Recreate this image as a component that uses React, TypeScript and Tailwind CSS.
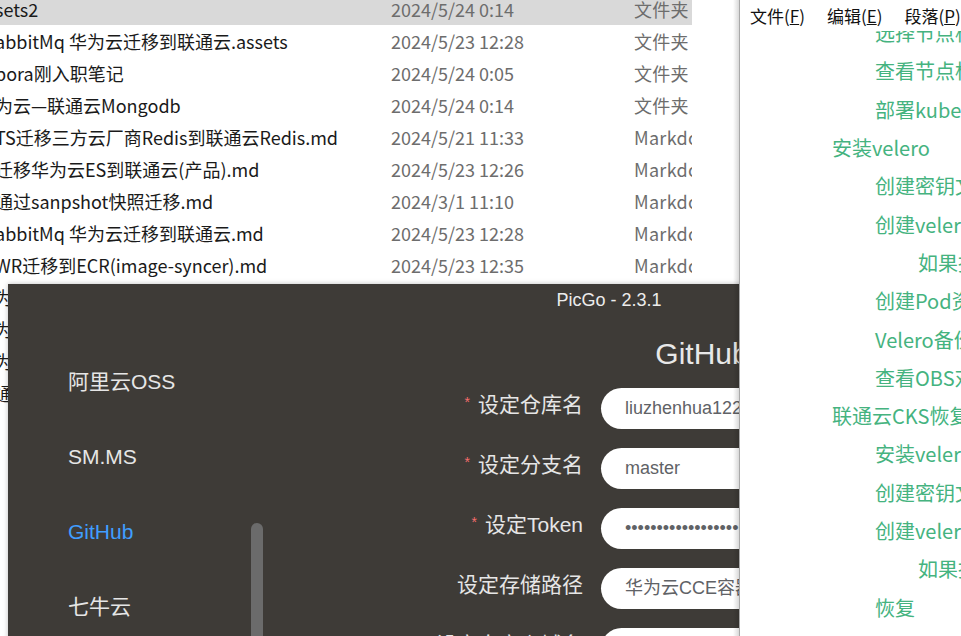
import React from "react";

const files = [
  { name: "sets2", date: "2024/5/24 0:14", type: "文件夹", selected: true },
  { name: "abbitMq 华为云迁移到联通云.assets", date: "2024/5/23 12:28", type: "文件夹" },
  { name: "pora刚入职笔记", date: "2024/5/24 0:05", type: "文件夹" },
  { name: "为云—联通云Mongodb", date: "2024/5/24 0:14", type: "文件夹" },
  { name: "TS迁移三方云厂商Redis到联通云Redis.md", date: "2024/5/21 11:33", type: "Markdown" },
  { name: "迁移华为云ES到联通云(产品).md", date: "2024/5/23 12:26", type: "Markdown" },
  { name: "通过sanpshot快照迁移.md", date: "2024/3/1 11:10", type: "Markdown" },
  { name: "abbitMq 华为云迁移到联通云.md", date: "2024/5/23 12:28", type: "Markdown" },
  { name: "WR迁移到ECR(image-syncer).md", date: "2024/5/23 12:35", type: "Markdown" },
  { name: "为云CCE迁移.md", date: "2024/5/23 12:40", type: "Markdown" },
  { name: "为云RDS迁移.md", date: "2024/5/23 12:41", type: "Markdown" },
  { name: "为云OBS迁移.md", date: "2024/5/23 12:42", type: "Markdown" },
  { name: "通云环境说明.md", date: "2024/5/23 12:43", type: "Markdown" },
];

const outline = [
  { text: "选择节点标签", level: 3 },
  { text: "查看节点标签", level: 3 },
  { text: "部署kube-state", level: 3 },
  { text: "安装velero", level: 2 },
  { text: "创建密钥文件", level: 3 },
  { text: "创建velero实例", level: 3 },
  { text: "如果报错", level: 4 },
  { text: "创建Pod资源", level: 3 },
  { text: "Velero备份数据", level: 3 },
  { text: "查看OBS对象", level: 3 },
  { text: "联通云CKS恢复", level: 2 },
  { text: "安装velero", level: 3 },
  { text: "创建密钥文件", level: 3 },
  { text: "创建velero实例", level: 3 },
  { text: "如果报错", level: 4 },
  { text: "恢复", level: 3 },
];

const indent: Record<number, string> = {
  2: "pl-[92px]",
  3: "pl-[135px]",
  4: "pl-[178px]",
};

const uploaders = [
  { name: "阿里云OSS" },
  { name: "SM.MS" },
  { name: "GitHub", active: true },
  { name: "七牛云" },
];

const fields = [
  { label: "设定仓库名", required: true, value: "liuzhenhua122/typora-images" },
  { label: "设定分支名", required: true, value: "master" },
  { label: "设定Token", required: true, value: "•".repeat(40) },
  { label: "设定存储路径", required: false, value: "华为云CCE容器迁移/" },
  { label: "设定自定义域名", required: false, value: "" },
];

function Explorer() {
  return (
    <div className="absolute left-0 top-0 w-[733px] h-[430px] bg-white font-['Noto_Sans_CJK_SC',sans-serif] text-[18px]">
      <div className="w-[692px] overflow-hidden -mt-[7px]">
        {files.map((f, i) => (
          <div
            key={i}
            className={`flex h-[32px] items-center whitespace-nowrap ${f.selected ? "bg-[#d9d9d9]" : ""}`}
          >
            <div className="w-[391px] shrink-0 -ml-[5px] text-[#1a1a1a] overflow-hidden">{f.name}</div>
            <div className="w-[243px] shrink-0 ml-[5px] text-[#6d6d6d]">{f.date}</div>
            <div className="shrink-0 text-[#6d6d6d] tracking-[0.3px]">{f.type}</div>
          </div>
        ))}
      </div>
    </div>
  );
}

function PicGo() {
  return (
    <div className="absolute left-[8px] top-[284px] w-[1202px] h-[400px] bg-[#3e3b37] shadow-[0_0_5px_rgba(0,0,0,0.25)] font-['Liberation_Sans','Noto_Sans_CJK_SC',sans-serif] text-[#e6e6e6]">
      <div className="h-[32px] flex items-center justify-center text-[18px] text-[#ececec]">PicGo - 2.3.1</div>
      <div className="flex">
        <div className="relative w-[257px] shrink-0 pt-[28px] h-[368px]">
          {uploaders.map((u) => (
            <div
              key={u.name}
              className={`h-[75px] flex items-center pl-[60px] text-[21px] ${u.active ? "text-[#409eff]" : "text-[#e6e6e6]"}`}
            >
              {u.name}
            </div>
          ))}
          <div className="absolute left-[243px] top-[207px] w-[12px] h-[200px] rounded-full bg-[#6b6b6b]" />
        </div>
        <div className="flex-1 pl-[168px] pt-[18px] flex flex-col">
          <div className="w-[538px] h-[40px] leading-[40px] text-center text-[30px] text-[#e8e8e8]">GitHub</div>
          <div className="w-[538px] mt-[14px] flex flex-col gap-[19px]">
            {fields.map((f) => (
              <div key={f.label} className="flex items-center h-[41px]">
                <div className="w-[150px] shrink-0 text-right text-[21px] text-[#e6e6e6] whitespace-nowrap -mt-[8px]">
                  {f.required && <span className="relative -top-[5px] mr-[8px] text-[14px] text-[#f56c6c]">*</span>}
                  {f.label}
                </div>
                <div className="ml-[18px] w-[370px] h-[41px] rounded-full bg-white pl-[24px] flex items-center text-[18px] text-[#606266] whitespace-nowrap overflow-hidden">
                  {f.value}
                </div>
              </div>
            ))}
          </div>
        </div>
      </div>
    </div>
  );
}

function Typora() {
  return (
    <div className="absolute left-[733px] top-0 h-[636px] w-[228px] z-20 flex font-['Noto_Sans_CJK_SC',sans-serif]">
      <div className="w-[6px] h-full bg-gradient-to-r from-black/0 to-black/15" />
      <div className="w-px h-full bg-[#a9a9a9]" />
      <div className="flex-1 bg-white overflow-hidden">
        <div className="relative z-10 h-[31px] bg-white flex items-center gap-[22px] pl-[10px] text-[17px] text-[#111] whitespace-nowrap">
          <span>
            文件(<span className="underline">F</span>)
          </span>
          <span>
            编辑(<span className="underline">E</span>)
          </span>
          <span>
            段落(<span className="underline">P</span>)
          </span>
        </div>
        <div className="-mt-[17px]">
          {outline.map((o, i) => (
            <div
              key={i}
              className={`h-[38.3px] flex items-center whitespace-nowrap text-[20px] text-[#45b37f] ${indent[o.level]}`}
            >
              {o.text}
            </div>
          ))}
        </div>
      </div>
    </div>
  );
}

export default function App() {
  return (
    <div className="relative w-[961px] h-[636px] overflow-hidden bg-white">
      <Explorer />
      <PicGo />
      <Typora />
    </div>
  );
}
